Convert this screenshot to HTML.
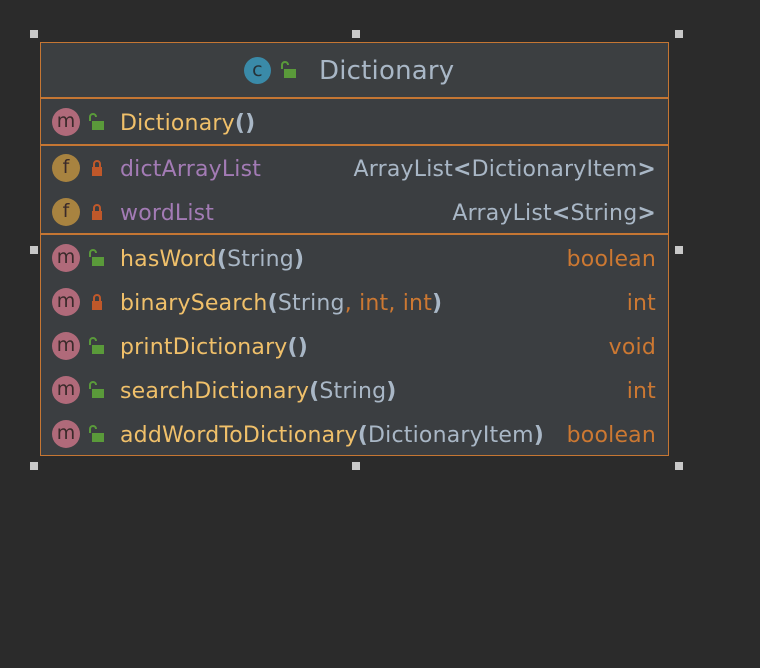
<!DOCTYPE html><html><head><style>
body{margin:0;width:760px;height:668px;background:#2b2b2b;position:relative;overflow:hidden;font-family:"DejaVu Sans",sans-serif;font-size:22px;letter-spacing:0.2px}
.box{position:absolute;left:40px;top:42px;width:629px;height:414px;border:1px solid #c57633;background:#3b3e41;box-sizing:border-box}
.hd{position:absolute;left:0;top:0;width:100%;height:56px;background:#3c3f41;border-bottom:2px solid #c57633;box-sizing:border-box}
.sep{position:absolute;left:0;width:100%;height:2px;background:#c57633}
.row{position:absolute;left:0;width:100%;height:44px}
.ic{position:absolute;left:11px;top:8px;width:28px;height:28px;border-radius:50%;display:flex;align-items:center;justify-content:center;font-size:19px;color:#3a2a2a;letter-spacing:0}
.ic span{margin-top:-2px}
.m{background:#b06a7a}.f{background:#a88340}
.lk{position:absolute;left:47px;top:13px}
.nm{position:absolute;left:79px;top:11px;color:#f0c06a;white-space:nowrap}
.fd{color:#a37bb5}
.ty{position:absolute;right:12px;top:11px;color:#a9b7c6;white-space:nowrap}
.or{color:#cc7832}
.g{color:#a9b7c6}
.h{position:absolute;width:8px;height:8px;background:#c8c8c8}
</style></head><body>
<div class="h" style="left:30px;top:30px"></div><div class="h" style="left:352px;top:30px"></div><div class="h" style="left:675px;top:30px"></div>
<div class="h" style="left:30px;top:246px"></div><div class="h" style="left:675px;top:246px"></div>
<div class="h" style="left:30px;top:462px"></div><div class="h" style="left:352px;top:462px"></div><div class="h" style="left:675px;top:462px"></div>
<div class="box">
<div class="hd">
<div style="position:absolute;left:203px;top:14px;width:27px;height:27px;border-radius:50%;background:#3a8aa8;display:flex;align-items:center;justify-content:center;color:#263238;font-size:19px"><span style="margin-top:-2px">c</span></div>
<svg style="position:absolute;left:239px;top:18px" width="18" height="18"><path d="M2 8V4a3 3 0 0 1 6 0" stroke="#5a9a3a" stroke-width="2" fill="none"/><rect x="4" y="8" width="12" height="9" fill="#5a9a3a"/></svg>
<div style="position:absolute;left:278px;top:13px;color:#a9b7c6;font-size:26px">Dictionary</div>
</div>
<div class="sep" style="top:101px"></div>
<div class="sep" style="top:190px"></div>
<svg width="0" height="0" style="position:absolute"><defs>
<g id="pu"><path d="M2 8V4a3 3 0 0 1 6 0" stroke="#5a9a3a" stroke-width="2" fill="none"/><rect x="4" y="8" width="12" height="9" fill="#5a9a3a"/></g>
<g id="pr"><path d="M3 8V5a3 3 0 0 1 6 0v3" stroke="#c0582a" stroke-width="2" fill="none"/><rect x="1" y="8" width="10" height="9" fill="#c0582a"/></g>
</defs></svg>
<div class="row" style="top:57px"><div class="ic m"><span>m</span></div><svg class="lk" width="18" height="18"><use href="#pu"/></svg><div class="nm">Dictionary<b class="g">()</b></div></div>
<div class="row" style="top:103px"><div class="ic f"><span>f</span></div><svg class="lk" width="18" height="18" style="left:50px"><use href="#pr"/></svg><div class="nm fd">dictArrayList</div><div class="ty">ArrayList<b>&lt;</b>DictionaryItem<b>&gt;</b></div></div>
<div class="row" style="top:147px"><div class="ic f"><span>f</span></div><svg class="lk" width="18" height="18" style="left:50px"><use href="#pr"/></svg><div class="nm fd">wordList</div><div class="ty">ArrayList<b>&lt;</b>String<b>&gt;</b></div></div>
<div class="row" style="top:193px"><div class="ic m"><span>m</span></div><svg class="lk" width="18" height="18"><use href="#pu"/></svg><div class="nm">hasWord<b class="g">(</b><span class="g">String</span><b class="g">)</b></div><div class="ty or">boolean</div></div>
<div class="row" style="top:237px"><div class="ic m"><span>m</span></div><svg class="lk" width="18" height="18" style="left:50px"><use href="#pr"/></svg><div class="nm">binarySearch<b class="g">(</b><span class="g">String</span><span class="or">, int, int</span><b class="g">)</b></div><div class="ty or">int</div></div>
<div class="row" style="top:281px"><div class="ic m"><span>m</span></div><svg class="lk" width="18" height="18"><use href="#pu"/></svg><div class="nm">printDictionary<b class="g">()</b></div><div class="ty or">void</div></div>
<div class="row" style="top:325px"><div class="ic m"><span>m</span></div><svg class="lk" width="18" height="18"><use href="#pu"/></svg><div class="nm">searchDictionary<b class="g">(</b><span class="g">String</span><b class="g">)</b></div><div class="ty or">int</div></div>
<div class="row" style="top:369px"><div class="ic m"><span>m</span></div><svg class="lk" width="18" height="18"><use href="#pu"/></svg><div class="nm">addWordToDictionary<b class="g">(</b><span class="g">DictionaryItem</span><b class="g">)</b></div><div class="ty or">boolean</div></div>
</div>
</body></html>
